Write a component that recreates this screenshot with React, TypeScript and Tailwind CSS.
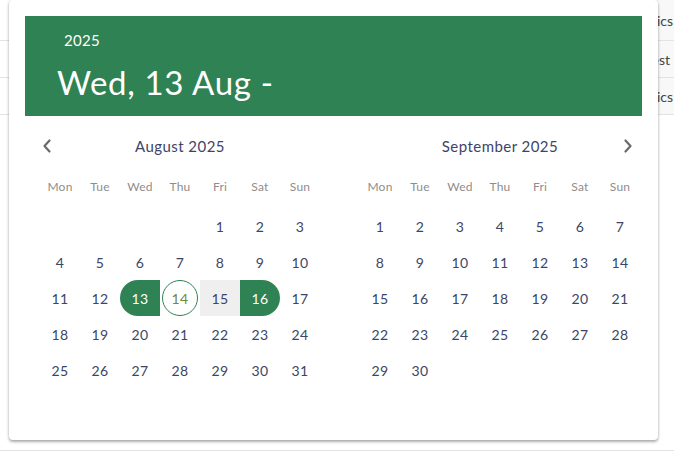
const font = { fontFamily: 'Lato, "Noto Sans", sans-serif' };

type Month = { title: string; offset: number; days: number };

const months: Month[] = [
  { title: 'August 2025', offset: 4, days: 31 },
  { title: 'September 2025', offset: 0, days: 30 },
];

const weekdays = ['Mon', 'Tue', 'Wed', 'Thu', 'Fri', 'Sat', 'Sun'];

function Chevron({ dir }: { dir: 'left' | 'right' }) {
  return (
    <svg width="10" height="14" viewBox="0 0 10 14" className="text-[#6b6b6b]">
      <path
        d={dir === 'left' ? 'M7.5 1.5 2.5 7l5 5.5' : 'M2.5 1.5 7.5 7l-5 5.5'}
        fill="none"
        stroke="currentColor"
        strokeWidth="2.2"
        strokeLinecap="round"
        strokeLinejoin="round"
      />
    </svg>
  );
}

function DayCell({ day, inAug }: { day: number; inAug: boolean }) {
  if (inAug && day === 13) {
    return (
      <div className="h-9 flex items-center justify-center bg-[#2f8253] text-white rounded-l-full">
        {day}
      </div>
    );
  }
  if (inAug && day === 16) {
    return (
      <div className="h-9 flex items-center justify-center bg-[#2f8253] text-white rounded-r-full">
        {day}
      </div>
    );
  }
  if (inAug && day === 14) {
    return (
      <div className="h-9 flex items-center justify-center">
        <div className="w-9 h-9 rounded-full border border-[#2f8253] flex items-center justify-center text-[#6f8a3a]">
          {day}
        </div>
      </div>
    );
  }
  if (inAug && day === 15) {
    return <div className="h-9 flex items-center justify-center bg-[#efefef] text-[#3e4468]">{day}</div>;
  }
  return <div className="h-9 flex items-center justify-center text-[#3e4468]">{day}</div>;
}

function MonthGrid({ month, first }: { month: Month; first: boolean }) {
  const cells: (number | null)[] = [];
  for (let i = 0; i < month.offset; i++) cells.push(null);
  for (let d = 1; d <= month.days; d++) cells.push(d);

  return (
    <div className="w-[280px]">
      <div className="h-9 flex items-center justify-between relative">
        <div className="w-4 flex justify-center -ml-[1px]">{first && <Chevron dir="left" />}</div>
        <div className="text-[15px] tracking-[0.03em] text-[#3e4468] absolute left-0 right-0 text-center">
          {month.title}
        </div>
        <div className="w-4 flex justify-center mr-[4px]">{!first && <Chevron dir="right" />}</div>
      </div>
      <div className="grid grid-cols-7 mt-[5px] h-9 items-center text-[12px] tracking-[0.02em] text-[#8f8d8b]">
        {weekdays.map((w) => (
          <div key={w} className="text-center">{w}</div>
        ))}
      </div>
      <div className="grid grid-cols-7 mt-[3px] text-[14px] tracking-[0.03em]">
        {cells.map((d, i) => (d === null ? <div key={i} className="h-9" /> : <DayCell key={i} day={d} inAug={first} />))}
      </div>
    </div>
  );
}

export default function App() {
  const rows = ['Dynamics', 'Best', 'Dynamics'];
  return (
    <div className="relative w-[674px] h-[454px] overflow-hidden bg-white" style={font}>
      {/* table behind the popup */}
      <div className="flex flex-col h-full">
        {rows.map((r, i) => (
          <div
            key={i}
            className={`flex items-center justify-end border-b border-[#e3e3e3] ${i === 0 ? 'h-[41px]' : 'h-[37px]'}`}
          >
            <div
              className={`w-[90px] h-full bg-[#f8f8f8] flex items-center justify-end text-[14px] text-[#444] whitespace-nowrap ${
                r === 'Best' ? 'pr-[4px]' : 'pr-[1px]'
              }`}
            >
              {r}
            </div>
          </div>
        ))}
        <div className="flex-1 border-b border-[#e3e3e3] mb-[3px]" />
      </div>

      {/* date range popup */}
      <div className="absolute left-[9px] top-0 w-[649px] h-[440px] bg-white rounded-[4px] shadow-[0_2px_3px_rgba(0,0,0,0.3),0_0_3px_rgba(0,0,0,0.12)] p-4">
        <div className="h-[100px] bg-[#2f8253] text-white flex flex-col">
          <div className="pl-[39px] pt-[16px] text-[15px] leading-[16px] tracking-[0.02em]">2025</div>
          <div className="pl-[32px] mt-[14px] text-[33px] leading-[40px] tracking-[0.02em]">Wed, 13 Aug -</div>
        </div>
        <div className="flex gap-10 pl-[15px] pt-[12px]">
          {months.map((m, i) => (
            <MonthGrid key={m.title} month={m} first={i === 0} />
          ))}
        </div>
      </div>
    </div>
  );
}
